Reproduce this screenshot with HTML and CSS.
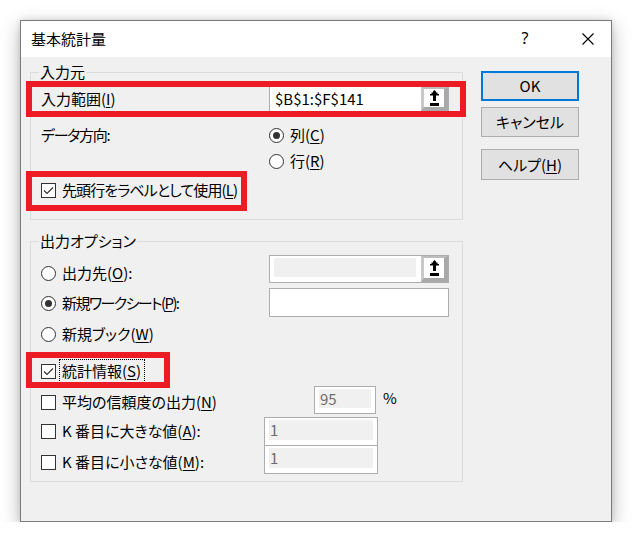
FILE: index.html
```html
<!DOCTYPE html>
<html lang="ja">
<head>
<meta charset="utf-8">
<title>基本統計量</title>
<link rel="stylesheet" href="styles.css">
</head>
<body>
<div class="dialog">
  <div class="titlebar">
    <span class="title">基本統計量</span>
    <span class="tb-btn help">?</span>
    <span class="tb-btn close">
      <svg width="12" height="12" viewBox="0 0 12 12"><path d="M0.5 0.5 L11.5 11.5 M11.5 0.5 L0.5 11.5" stroke="#000" stroke-width="1.1" fill="none"/></svg>
    </span>
  </div>
  <div class="content">
    <div class="main">
      <fieldset class="group g1">
        <legend>入力元</legend>
        <div class="row r-range">
          <span class="lbl-col w228">入力範囲(<u>I</u>)</span>
          <div class="refedit">
            <span class="ref-text">$B$1:$F$141</span>
            <span class="ref-btn"><svg width="9" height="16" viewBox="0 0 9 16"><path d="M4.5 0 L6 1.5 L6 2.5 L7.5 2.5 L7.5 4 L9 4 L9 5.5 L6 5.5 L6 11 L3 11 L3 5.5 L0 5.5 L0 4 L1.5 4 L1.5 2.5 L3 2.5 L3 1.5 Z" fill="#000"/><rect x="0" y="13" width="9" height="3" fill="#000"/></svg></span>
          </div>
        </div>
        <div class="row r-dir">
          <span class="lbl-col w228"><span class="ls-dir">データ方向:</span></span>
          <span class="opt"><span class="rb on"></span><span class="txt">列(<u>C</u>)</span></span>
        </div>
        <div class="row">
          <span class="lbl-col w228"></span>
          <span class="opt"><span class="rb"></span><span class="txt">行(<u>R</u>)</span></span>
        </div>
        <div class="row r-head">
          <span class="opt"><span class="cb on"><svg width="13" height="13" viewBox="0 0 13 13"><path d="M2 6.5 L5 9.5 L11 3.5" stroke="#333" stroke-width="1.2" fill="none"/></svg></span><span class="txt ls-head">先頭行をラベルとして使用(<u>L</u>)</span></span>
        </div>
      </fieldset>

      <fieldset class="group g2">
        <legend>出力オプション</legend>
        <div class="row2 r-a">
          <span class="opt w228"><span class="rb"></span><span class="txt">出力先(<u>O</u>):</span></span>
          <div class="refedit dis in-a">
            <span class="ref-text"><span class="grey"></span></span>
            <span class="ref-btn"><svg width="9" height="16" viewBox="0 0 9 16"><path d="M4.5 0 L6 1.5 L6 2.5 L7.5 2.5 L7.5 4 L9 4 L9 5.5 L6 5.5 L6 11 L3 11 L3 5.5 L0 5.5 L0 4 L1.5 4 L1.5 2.5 L3 2.5 L3 1.5 Z" fill="#000"/><rect x="0" y="13" width="9" height="3" fill="#000"/></svg></span>
          </div>
        </div>
        <div class="row2 r-b">
          <span class="opt w228"><span class="rb on"></span><span class="txt ls-sheet">新規ワークシート(<u>P</u>):</span></span>
          <div class="edit in-b"></div>
        </div>
        <div class="row2 r-c">
          <span class="opt"><span class="rb"></span><span class="txt">新規ブック(<u>W</u>)</span></span>
        </div>
        <div class="row2 r-d">
          <span class="opt"><span class="cb on"><svg width="13" height="13" viewBox="0 0 13 13"><path d="M2 6.5 L5 9.5 L11 3.5" stroke="#333" stroke-width="1.2" fill="none"/></svg></span><span class="txt focus">統計情報(<u>S</u>)</span></span>
        </div>
        <div class="row2 r-e">
          <span class="opt w273"><span class="cb"></span><span class="txt">平均の信頼度の出力(<u>N</u>)</span></span>
          <div class="dedit in-e"><span class="grey">95</span></div>
          <span class="pct">%</span>
        </div>
        <div class="row2 r-f">
          <span class="opt w223"><span class="cb"></span><span class="txt">K 番目に大きな値(<u>A</u>):</span></span>
          <div class="dedit in-f"><span class="grey">1</span></div>
        </div>
        <div class="row2 r-g">
          <span class="opt w223"><span class="cb"></span><span class="txt">K 番目に小さな値(<u>M</u>):</span></span>
          <div class="dedit in-g"><span class="grey">1</span></div>
        </div>
      </fieldset>
    </div>

    <div class="buttons">
      <button class="btn ok">OK</button>
      <button class="btn cancel">キャンセル</button>
      <button class="btn helpbtn">ヘルプ(<u>H</u>)</button>
    </div>
  </div>

  <div class="mark m1"></div>
  <div class="mark m2"></div>
  <div class="mark m3"></div>
</div>
</body>
</html>
```

FILE: styles.css
```css
html, body {
  margin: 0;
  padding: 0;
  background: #ffffff;
}
body {
  font-family: "Noto Sans CJK JP", "Noto Sans", sans-serif;
  font-size: 15px;
  color: #000;
  font-feature-settings: "palt";
}
u {
  text-decoration: underline;
  text-underline-offset: 2px;
}

.dialog {
  position: relative;
  margin: 20px 0 0 20px;
  width: 592px;
  height: 502px;
  box-sizing: border-box;
  border: 1px solid #7a7a7a;
  background: #f0f0f0;
  box-shadow: 0 6px 18px rgba(0, 0, 0, 0.28), 0 0 6px rgba(0, 0, 0, 0.12);
  display: flex;
  flex-direction: column;
}

.titlebar {
  height: 36px;
  background: #ffffff;
  display: flex;
  align-items: center;
  padding-left: 10px;
}
.title {
  flex: 1;
  font-size: 15px;
  line-height: 20px;
  margin-top: -1px;
}
.tb-btn {
  width: 46px;
  height: 36px;
  display: flex;
  align-items: center;
  justify-content: center;
}
.help {
  font-family: "Noto Sans", sans-serif;
  font-size: 16px;
  margin-top: -2px;
}
.close {
  margin-left: 17px;
}

.content {
  flex: 1;
  display: flex;
  align-items: flex-start;
  padding-left: 9px;
}
.main {
  width: 433px;
}

.group {
  margin: 0;
  border: 1px solid #dcdcdc;
  padding: 0 12px 16px 10px;
  min-width: 0;
}
.group legend {
  padding: 0 1px;
  margin-left: -2px;
  line-height: 20px;
  height: 20px;
}
.g1 {
  margin-top: 5px;
}
.g2 {
  margin-top: 11px;
  padding-bottom: 4px;
}

.row {
  display: flex;
  align-items: center;
  height: 26px;
}
.r-range {
  margin-top: 4px;
}
.r-dir {
  margin-top: 10px;
}
.r-head {
  margin-top: 3px;
}

.row2 {
  display: flex;
  align-items: flex-start;
  height: 30px;
}
.row2 > .opt {
  height: 30px;
}
.r-a { margin-top: 7px; }
.r-c { margin-top: 1px; }
.r-d { margin-top: 7px; }
.r-e { margin-top: 1px; }
.r-f { margin-top: -1px; }
.r-g { margin-top: 1px; }

.lbl-col {
  display: flex;
  align-items: center;
  line-height: 20px;
}
.w228 { width: 228px; flex: none; }
.w273 { width: 273px; flex: none; }
.w223 { width: 223px; flex: none; }

.ls-dir { letter-spacing: -1.3px; }
.ls-head { letter-spacing: -0.9px; }
.ls-sheet { letter-spacing: -1.6px; }

.opt {
  display: flex;
  align-items: center;
  line-height: 20px;
}
.opt .txt {
  margin-left: 6px;
}
.opt .txt.focus {
  margin-left: 3px;
  padding: 1px 3px 1px 2px;
  border: 1px dotted #000;
}

.rb {
  width: 15px;
  height: 15px;
  box-sizing: border-box;
  border: 1px solid #333;
  border-radius: 50%;
  background: #fff;
  display: flex;
  align-items: center;
  justify-content: center;
  flex: none;
}
.rb.on::after {
  content: "";
  width: 7px;
  height: 7px;
  border-radius: 50%;
  background: #333;
}
.cb {
  width: 15px;
  height: 15px;
  box-sizing: border-box;
  border: 1px solid #333;
  background: #fff;
  display: flex;
  align-items: center;
  justify-content: center;
  flex: none;
}
.cb svg {
  display: block;
}

.refedit {
  display: flex;
  width: 180px;
  height: 26px;
  box-sizing: border-box;
  border: 1px solid #adadad;
  background: #fff;
  flex: none;
}
.ref-text {
  flex: 1;
  padding-left: 5px;
  line-height: 24px;
  font-size: 15px;
}
.ref-btn {
  width: 27px;
  box-sizing: border-box;
  border-style: solid;
  border-color: #bdbdbd #a9a9a9 #a9a9a9 #c8c8c8;
  border-width: 2px 4px 4px 3px;
  background: #fff;
  display: flex;
  align-items: center;
  justify-content: center;
}
.ref-btn svg {
  display: block;
}
.refedit.dis {
  height: 28px;
}
.in-a {
  margin-top: -3px;
}
.refedit.dis .ref-text {
  padding: 2px 5px 5px 4px;
  display: flex;
}
.refedit.dis .grey {
  flex: 1;
  background: #f0f0f0;
}

.edit {
  width: 180px;
  height: 29px;
  box-sizing: border-box;
  border: 1px solid #adadad;
  background: #fff;
  flex: none;
}

.dedit {
  box-sizing: border-box;
  border: 1px solid #adadad;
  background: #fff;
  padding: 2px 4px 5px 4px;
  display: flex;
  flex: none;
}
.dedit .grey {
  flex: 1;
  background: #f0f0f0;
  color: #6d6d6d;
  line-height: 20px;
  padding-left: 1px;
  font-size: 15px;
}
.in-e {
  width: 62px;
  height: 28px;
  margin-top: -1px;
}
.in-f {
  width: 114px;
  height: 29px;
  margin-top: 1px;
}
.in-g {
  width: 114px;
  height: 29px;
  margin-top: -2px;
}
.pct {
  margin-left: 7px;
  line-height: 20px;
  margin-top: 1px;
}

.buttons {
  margin-left: 18px;
  margin-top: 14px;
  display: flex;
  flex-direction: column;
  width: 98px;
}
.btn {
  font-family: "Noto Sans CJK JP", "Noto Sans", sans-serif;
  font-feature-settings: "palt";
  font-size: 15px;
  color: #000;
  background: #e1e1e1;
  border: 1px solid #adadad;
  box-sizing: border-box;
  width: 98px;
  height: 30px;
  padding: 0;
  line-height: 20px;
}
.btn.ok {
  border: 2px solid #0078d7;
}
.btn.cancel {
  margin-top: 6px;
}
.btn.helpbtn {
  margin-top: 12px;
  height: 31px;
}

.mark {
  position: absolute;
  box-sizing: border-box;
  border: 6px solid #ed1c24;
  pointer-events: none;
}
.m1 {
  left: 5px;
  top: 60px;
  width: 440px;
  height: 36px;
}
.m2 {
  left: 5px;
  top: 150px;
  width: 221px;
  height: 40px;
}
.m3 {
  left: 5px;
  top: 331px;
  width: 144px;
  height: 36px;
}
```
